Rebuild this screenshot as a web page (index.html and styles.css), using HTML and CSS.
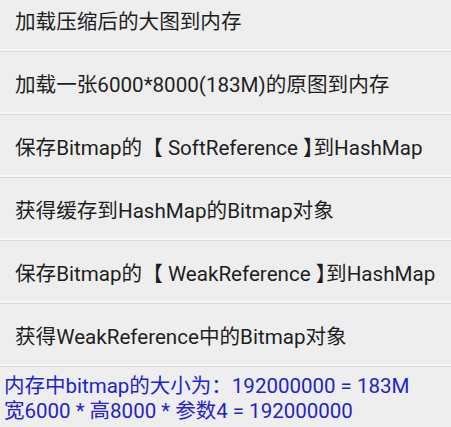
FILE: index.html
```html
<!DOCTYPE html>
<html lang="zh-CN">
<head>
    <meta charset="UTF-8">
    <meta name="viewport" content="width=device-width, initial-scale=1.0">
    <title>Bitmap 引用测试</title>
    <link rel="stylesheet" href="styles.css">
</head>
<body>
    <main class="screen">
        <div class="actions">
            <button class="action">加载压缩后的大图到内存</button>
            <button class="action">加载一张6000*8000(183M)的原图到内存</button>
            <button class="action">保存Bitmap的【 SoftReference <span class="close">】</span>到HashMap</button>
            <button class="action">获得缓存到HashMap的Bitmap对象</button>
            <button class="action">保存Bitmap的【 WeakReference <span class="close">】</span>到HashMap</button>
            <button class="action">获得WeakReference中的Bitmap对象</button>
        </div>
        <p class="info">内存中bitmap的大小为：192000000 = 183M<br>宽6000 * 高8000 * 参数4 = 192000000</p>
    </main>
</body>
</html>
```

FILE: styles.css
```css
* {
    margin: 0;
    padding: 0;
    box-sizing: border-box;
}

body {
    font-family: Roboto, "Noto Sans CJK SC", sans-serif;
    background-color: #eeeeee;
    color: #222;
    overflow: hidden;
}

.screen {
    width: 451px;
    height: 427px;
    overflow: hidden;
}

/* list is scrolled a little, first row is cut at the top */
.actions {
    display: flex;
    flex-direction: column;
    margin-top: -11px;
}

.action {
    height: 63px;
    padding: 0 15px;
    border: none;
    border-bottom: 1px solid #d9d9d9;
    box-shadow: inset 0 -2px 0 #f7f7f7;
    background-color: #eeeeee;
    font-family: inherit;
    font-size: 20.6px;
    color: #1e1e1e;
    text-align: left;
    white-space: nowrap;
}

/* closing bracket sits tight against the next char */
.close {
    font-feature-settings: "halt";
}

.info {
    padding: 7px 4px 0;
    font-size: 20.5px;
    line-height: 25px;
    color: #2323c8;
    white-space: nowrap;
}
```
